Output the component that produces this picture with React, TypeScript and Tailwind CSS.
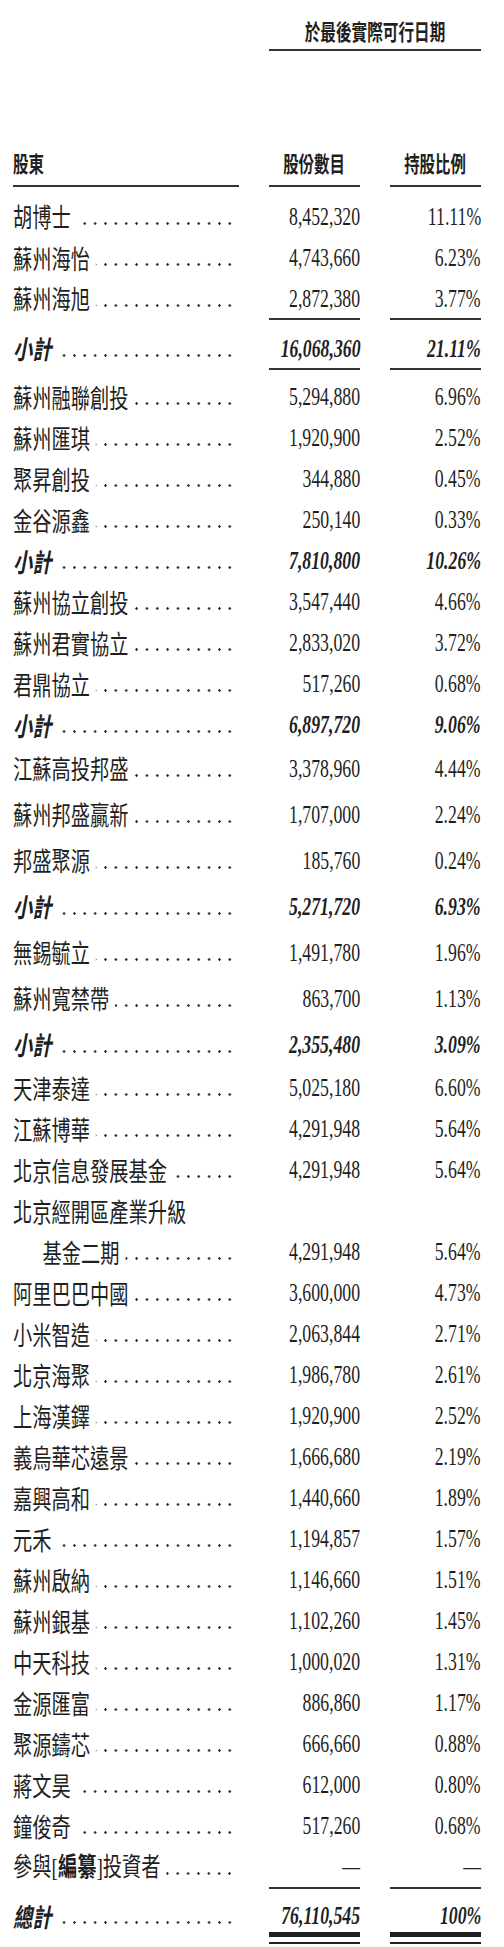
import type { ReactNode } from "react"

type Kind = "plain" | "sub" | "subLined"

type Row = {
  name: ReactNode
  shares?: string
  pct?: string
  kind?: Kind
  h: string
  indent?: boolean
  noLeader?: boolean
}

const rows: Row[] = [
  { name: "胡博士", shares: "8,452,320", pct: "11.11%", h: "h-[42px]" },
  { name: "蘇州海怡", shares: "4,743,660", pct: "6.23%", h: "h-[41px]" },
  { name: "蘇州海旭", shares: "2,872,380", pct: "3.77%", h: "h-[40px]" },
  { name: "小計", shares: "16,068,360", pct: "21.11%", kind: "subLined", h: "h-[58px]" },
  { name: "蘇州融聯創投", shares: "5,294,880", pct: "6.96%", h: "h-[41px]" },
  { name: "蘇州匯琪", shares: "1,920,900", pct: "2.52%", h: "h-[41px]" },
  { name: "聚昇創投", shares: "344,880", pct: "0.45%", h: "h-[41px]" },
  { name: "金谷源鑫", shares: "250,140", pct: "0.33%", h: "h-[41px]" },
  { name: "小計", shares: "7,810,800", pct: "10.26%", kind: "sub", h: "h-[41px]" },
  { name: "蘇州協立創投", shares: "3,547,440", pct: "4.66%", h: "h-[41px]" },
  { name: "蘇州君實協立", shares: "2,833,020", pct: "3.72%", h: "h-[41px]" },
  { name: "君鼎協立", shares: "517,260", pct: "0.68%", h: "h-[41px]" },
  { name: "小計", shares: "6,897,720", pct: "9.06%", kind: "sub", h: "h-[41px]" },
  { name: "江蘇高投邦盛", shares: "3,378,960", pct: "4.44%", h: "h-[46px]" },
  { name: "蘇州邦盛贏新", shares: "1,707,000", pct: "2.24%", h: "h-[46px]" },
  { name: "邦盛聚源", shares: "185,760", pct: "0.24%", h: "h-[46px]" },
  { name: "小計", shares: "5,271,720", pct: "6.93%", kind: "sub", h: "h-[46px]" },
  { name: "無錫毓立", shares: "1,491,780", pct: "1.96%", h: "h-[46px]" },
  { name: "蘇州寬禁帶", shares: "863,700", pct: "1.13%", h: "h-[46px]" },
  { name: "小計", shares: "2,355,480", pct: "3.09%", kind: "sub", h: "h-[46px]" },
  { name: "天津泰達", shares: "5,025,180", pct: "6.60%", h: "h-[41px]" },
  { name: "江蘇博華", shares: "4,291,948", pct: "5.64%", h: "h-[41px]" },
  { name: "北京信息發展基金", shares: "4,291,948", pct: "5.64%", h: "h-[41px]" },
  { name: "北京經開區產業升級", h: "h-[41px]", noLeader: true },
  { name: "基金二期", shares: "4,291,948", pct: "5.64%", h: "h-[41px]", indent: true },
  { name: "阿里巴巴中國", shares: "3,600,000", pct: "4.73%", h: "h-[41px]" },
  { name: "小米智造", shares: "2,063,844", pct: "2.71%", h: "h-[41px]" },
  { name: "北京海聚", shares: "1,986,780", pct: "2.61%", h: "h-[41px]" },
  { name: "上海漢鐸", shares: "1,920,900", pct: "2.52%", h: "h-[41px]" },
  { name: "義烏華芯遠景", shares: "1,666,680", pct: "2.19%", h: "h-[41px]" },
  { name: "嘉興高和", shares: "1,440,660", pct: "1.89%", h: "h-[41px]" },
  { name: "元禾", shares: "1,194,857", pct: "1.57%", h: "h-[41px]" },
  { name: "蘇州啟納", shares: "1,146,660", pct: "1.51%", h: "h-[41px]" },
  { name: "蘇州銀基", shares: "1,102,260", pct: "1.45%", h: "h-[41px]" },
  { name: "中天科技", shares: "1,000,020", pct: "1.31%", h: "h-[41px]" },
  { name: "金源匯富", shares: "886,860", pct: "1.17%", h: "h-[41px]" },
  { name: "聚源鑄芯", shares: "666,660", pct: "0.88%", h: "h-[41px]" },
  { name: "蔣文昊", shares: "612,000", pct: "0.80%", h: "h-[41px]" },
  { name: "鐘俊奇", shares: "517,260", pct: "0.68%", h: "h-[41px]" },
  {
    name: (
      <>
        參與<span className="font-['Liberation_Serif',serif]">[</span>
        <span className="font-bold">編纂</span>
        <span className="font-['Liberation_Serif',serif]">]</span>投資者
      </>
    ),
    shares: "—",
    pct: "—",
    h: "h-[41px]",
  },
]

function NameCell({ row, bold }: { row: { name: ReactNode; indent?: boolean; noLeader?: boolean }; bold: boolean }) {
  return (
    <div className="w-[226px] shrink-0 flex items-center">
      <div className="w-[305px] shrink-0 origin-left scale-x-[0.74] flex items-center">
        <span
          className={`whitespace-nowrap text-[26px] leading-none ${row.indent ? "pl-[40px]" : ""} ${
            bold ? "italic font-bold" : ""
          }`}
        >
          {row.name}
        </span>
        {!row.noLeader && (
          <div className="flex-1 ml-[8px] mr-[5px] h-[3px] mt-[14px] bg-[image:radial-gradient(circle,#222_1.2px,transparent_1.7px)] bg-[length:14px_3px] bg-right bg-repeat-x" />
        )}
      </div>
    </div>
  )
}

function Num({ value, bold }: { value?: string; bold: boolean }) {
  if (!value) return null
  return (
    <span
      className={`inline-block origin-right scale-x-[0.71] text-[25px] leading-none font-['Liberation_Serif',serif] ${
        bold ? "font-bold italic" : ""
      }`}
    >
      {value}
    </span>
  )
}

function TableRow({ row }: { row: Row }) {
  const bold = row.kind === "sub" || row.kind === "subLined"
  if (row.kind === "subLined") {
    return (
      <div className={`flex ${row.h}`}>
        <div className="flex pt-[2px]">
          <NameCell row={row} bold />
        </div>
        <div className="ml-[30px] w-[91px] h-[52px] border-y-2 border-[#333] pt-[8px] flex items-center justify-end">
          <Num value={row.shares} bold />
        </div>
        <div className="ml-[30px] w-[91px] h-[52px] border-y-2 border-[#333] pt-[8px] flex items-center justify-end">
          <Num value={row.pct} bold />
        </div>
      </div>
    )
  }
  return (
    <div className={`flex ${row.h}`}>
      <NameCell row={row} bold={bold} />
      <div className="ml-[30px] w-[91px] flex items-center justify-end">
        <Num value={row.shares} bold={bold} />
      </div>
      <div className="ml-[30px] w-[91px] flex items-center justify-end">
        <Num value={row.pct} bold={bold} />
      </div>
    </div>
  )
}

function TotalCell({ value }: { value: string }) {
  return (
    <div className="ml-[30px] w-[91px] flex flex-col">
      <div className="h-[43px] border-t-2 border-[#333] pt-[12px] flex items-center justify-end">
        <Num value={value} bold />
      </div>
      <div className="mt-[2px] h-[5px] bg-[#1f1f1f]" />
      <div className="mt-[5px] h-[2px] bg-[#1f1f1f]" />
    </div>
  )
}

export default function App() {
  return (
    <div className="w-[504px] h-[1947px] bg-white text-[#1f1f1f] font-['Noto_Sans_CJK_TC','Noto_Sans_CJK_SC',sans-serif] overflow-hidden">
      <div className="pl-[13px]">
        {/* column group title */}
        <div className="ml-[256px] w-[212px] pt-[18px] pb-[4px] border-b-2 border-[#333] text-center leading-[24px]">
          <span className="inline-block scale-x-[0.71] text-[22px] font-bold">於最後實際可行日期</span>
        </div>

        {/* headers */}
        <div className="mt-[99px] flex leading-[24px]">
          <div className="w-[226px] pb-[8px] border-b-2 border-[#333]">
            <span className="inline-block origin-left scale-x-[0.7] text-[22px] font-bold">股東</span>
          </div>
          <div className="ml-[30px] w-[91px] pb-[8px] border-b-2 border-[#333] text-center">
            <span className="inline-block scale-x-[0.7] text-[22px] font-bold">股份數目</span>
          </div>
          <div className="ml-[30px] w-[91px] pb-[8px] border-b-2 border-[#333] text-center">
            <span className="inline-block scale-x-[0.7] text-[22px] font-bold">持股比例</span>
          </div>
        </div>

        <div className="mt-[8px] flex flex-col">
          {rows.map((row, i) => (
            <TableRow key={i} row={row} />
          ))}

          <div className="flex h-[57px]">
            <div className="h-[43px] pt-[14px] flex">
              <NameCell row={{ name: "總計" }} bold />
            </div>
            <TotalCell value="76,110,545" />
            <TotalCell value="100%" />
          </div>
        </div>
      </div>
    </div>
  )
}
